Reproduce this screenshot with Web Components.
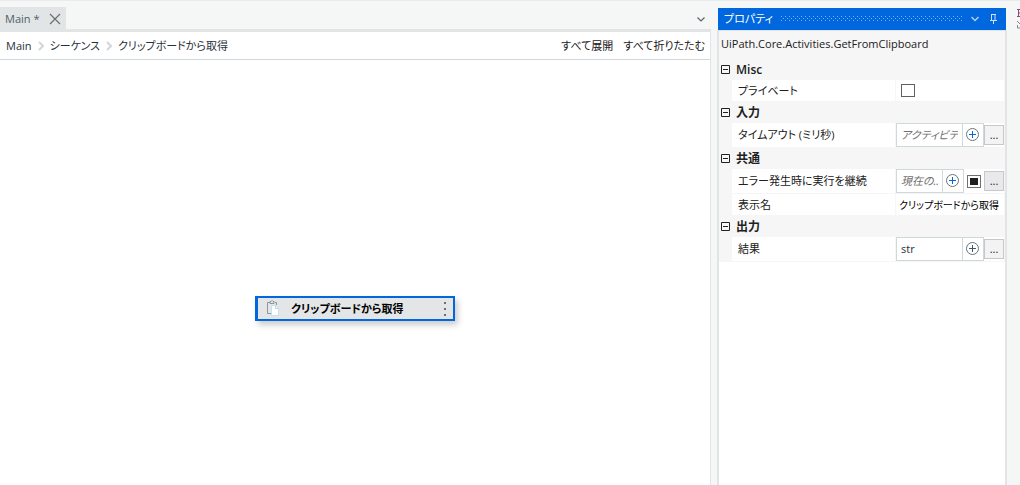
<!DOCTYPE html>
<html lang="ja">
<head>
<meta charset="UTF-8">
<title>Main</title>
<style>
    html, body {
        margin: 0;
        height: 100%;
    }

    body {
        --blue: #0067df;
        --chrome: #f4f7f6;
        --panel: #f6f6f6;
        --edge: #e2e5e5;
        --field: #cfd8dd;
        --ink: #202020;
        --navy: #273139;
        font-family: "Open Sans", "Noto Sans CJK JP", sans-serif;
        font-feature-settings: "palt";
        font-size: 11px;
        line-height: 16px;
        color: var(--ink);
        background: var(--chrome);
        overflow: hidden;
    }
</style>
</head>
<body>
<studio-app>
    <designer-pane slot="designer">
        <activity-card>クリップボードから取得</activity-card>
    </designer-pane>
    <properties-pane slot="properties" type="UiPath.Core.Activities.GetFromClipboard">
        <property-group label="Misc">
            <property-row label="プライベート" kind="check"></property-row>
        </property-group>
        <property-group label="入力">
            <property-row label="タイムアウト (ミリ秒)" kind="expression" hint="アクティビティ"></property-row>
        </property-group>
        <property-group label="共通">
            <property-row label="エラー発生時に実行を継続" kind="boolean" hint="現在の..."></property-row>
            <property-row label="表示名" kind="text" value="クリップボードから取得"></property-row>
        </property-group>
        <property-group label="出力">
            <property-row label="結果" kind="expression" value="str" plain></property-row>
        </property-group>
    </properties-pane>
</studio-app>

<script>
const RESET = `
    *, *::before, *::after { box-sizing: border-box; }
    button, input {
        font: inherit;
        font-feature-settings: inherit;
        color: inherit;
        margin: 0;
        padding: 0;
        border: 0;
        background: none;
        border-radius: 0;
        outline: none;
    }
    button { display: flex; align-items: center; justify-content: center; }
    svg { display: block; flex: none; }
`;

class StudioApp extends HTMLElement {
    constructor() {
        super();
        this.attachShadow({ mode: 'open' });
    }

    connectedCallback() {
        this.shadowRoot.innerHTML = `
            <style>
                ${RESET}
                :host {
                    box-sizing: border-box;
                    display: grid;
                    grid-template-columns: minmax(0, 1fr) 290px 13px;
                    height: 100vh;
                    border-top: 1px solid #e9ecec;
                }
                ::slotted(*) { min-width: 0; }
                ::slotted([slot="designer"]) { margin-right: 6px; }
                .dock {
                    padding: 7px 0 0 10px;
                    overflow: hidden;
                }
            </style>
            <slot name="designer"></slot>
            <slot name="properties"></slot>
            <div class="dock">
                <svg width="3" height="22" viewBox="0 0 3 22" fill="none">
                    <path d="M0 1.500h3M1.500 1v7M0 8.500h3M1 5h2" stroke="#8a4a80"/>
                    <path d="M0 13l3 3M.5 17v3H3" stroke="#85858a"/>
                </svg>
            </div>
        `;
    }
}

class DesignerPane extends HTMLElement {
    constructor() {
        super();
        this.attachShadow({ mode: 'open' });
    }

    connectedCallback() {
        const chevron = `
            <svg width="6" height="10" viewBox="0 0 6 10" fill="none" stroke="#cfd8dd" stroke-width="2">
                <path d="M1 1l4 4-4 4"/>
            </svg>`;

        this.shadowRoot.innerHTML = `
            <style>
                ${RESET}
                :host {
                    display: flex;
                    flex-direction: column;
                }
                .tabs {
                    display: flex;
                    align-items: flex-end;
                    justify-content: space-between;
                    height: 28px;
                }
                .tab {
                    display: flex;
                    align-items: center;
                    gap: 10px;
                    height: 22px;
                    padding: 2px 5px 0 5px;
                    background: var(--edge);
                    color: #526069;
                }
                .more { width: 20px; height: 20px; }
                .view {
                    flex: 1;
                    display: flex;
                    flex-direction: column;
                    border-top: 3px solid var(--edge);
                    border-right: 1px solid var(--edge);
                    background: #fff;
                }
                .bar {
                    display: flex;
                    align-items: center;
                    justify-content: space-between;
                    height: 28px;
                    padding: 0 5px 0 6px;
                    border-bottom: 1px solid var(--field);
                }
                nav, .actions {
                    display: flex;
                    align-items: center;
                    gap: 6px;
                }
                .actions { gap: 10px; }
                a {
                    color: var(--navy);
                    text-decoration: none;
                    white-space: nowrap;
                }
                .canvas {
                    flex: 1;
                    display: grid;
                    place-content: center;
                    padding-top: 72px;
                }
            </style>
            <div class="tabs">
                <div class="tab">
                    <span>Main *</span>
                    <button aria-label="閉じる">
                        <svg width="12" height="12" viewBox="0 0 12 12" fill="none" stroke="#6b6f72" stroke-width="1.200">
                            <path d="M1 1l10 10M11 1L1 11"/>
                        </svg>
                    </button>
                </div>
                <button class="more" aria-label="タブ一覧">
                    <svg width="8" height="5" viewBox="0 0 8 5" fill="none" stroke="#5a6469" stroke-width="1.200">
                        <path d="M.5 .5L4 4 7.500.5"/>
                    </svg>
                </button>
            </div>
            <div class="view">
                <div class="bar">
                    <nav>
                        <a href="#main">Main</a>${chevron}
                        <a href="#sequence">シーケンス</a>${chevron}
                        <a href="#activity">クリップボードから取得</a>
                    </nav>
                    <div class="actions">
                        <button>すべて展開</button>
                        <button>すべて折りたたむ</button>
                    </div>
                </div>
                <div class="canvas"><slot></slot></div>
            </div>
        `;
    }
}

class ActivityCard extends HTMLElement {
    constructor() {
        super();
        this.attachShadow({ mode: 'open' });
    }

    connectedCallback() {
        this.shadowRoot.innerHTML = `
            <style>
                ${RESET}
                :host {
                    box-sizing: border-box;
                    display: flex;
                    align-items: center;
                    width: 200px;
                    height: 25px;
                    padding: 0 6px 0 9px;
                    border: 2px solid var(--blue);
                    border-left-width: 3px;
                    background: #e3e5e7;
                    box-shadow: 3px 4px 6px rgba(0, 0, 0, 0.2);
                    color: #000;
                    font-weight: 600;
                }
                .title {
                    flex: 1;
                    margin-left: 12px;
                    white-space: nowrap;
                }
            </style>
            <svg width="12" height="17" viewBox="0 0 12 17" fill="none">
                <path d="M3 2.500H.5v11H4M8 2.500h1.500V5" stroke="#8a979e"/>
                <path d="M3 3.500v-2h1l1-1 1 1h1v2z" fill="#e3e5e7" stroke="#8a979e"/>
                <path d="M4.500 5.500h4l3 3v7h-7z" fill="#fff" stroke="#c5e3ee"/>
                <path d="M8.500 5.500v3h3" stroke="#b7dcea"/>
            </svg>
            <span class="title"><slot></slot></span>
            <button aria-label="オプション">
                <svg width="3" height="15" viewBox="0 0 3 15" fill="#6b6f72">
                    <path d="M0 1h2v2H0zM0 7h2v2H0zM0 13h2v2H0z"/>
                </svg>
            </button>
        `;
    }
}

class PropertiesPane extends HTMLElement {
    constructor() {
        super();
        this.attachShadow({ mode: 'open' });
    }

    connectedCallback() {
        this.shadowRoot.innerHTML = `
            <style>
                ${RESET}
                :host {
                    display: flex;
                    flex-direction: column;
                    padding-top: 7px;
                }
                header {
                    display: flex;
                    align-items: center;
                    height: 22px;
                    margin: 0 1px;
                    padding: 0 9px 0 6px;
                    background: var(--blue);
                    color: #fff;
                }
                h2 {
                    margin: 0;
                    font-size: 11px;
                    font-weight: 400;
                    white-space: nowrap;
                }
                .grip {
                    flex: 1;
                    width: 0;
                    height: 6px;
                    margin: 0 9px 0 8px;
                }
                header button + button { margin-left: 11px; }
                .body {
                    flex: 1;
                    border: 2px solid var(--edge);
                    border-width: 1px 2px 0;
                    background: #fff;
                }
                .type {
                    padding: 5px 2px 7px;
                    background: var(--panel);
                    color: var(--ink);
                }
            </style>
            <header>
                <h2>プロパティ</h2>
                <svg class="grip" aria-hidden="true">
                    <defs>
                        <pattern id="dots" width="4" height="4" patternUnits="userSpaceOnUse">
                            <path d="M0 0h1v1H0zM2 2h1v1H2z" fill="#7db3f0"/>
                        </pattern>
                    </defs>
                    <rect width="100%" height="100%" fill="url(#dots)"/>
                </svg>
                <button aria-label="メニュー">
                    <svg width="8" height="6" viewBox="0 0 8 6" fill="none" stroke="#b3d1f5" stroke-width="1.500">
                        <path d="M.5 1L4 4.500 7.500 1"/>
                    </svg>
                </button>
                <button aria-label="自動的に隠す">
                    <svg width="7" height="10" viewBox="0 0 7 10" fill="none" stroke="#cfe1f9">
                        <path d="M1 .5h5M1.500 0v6M5 0v6M0 6.500h7M3.500 7v3"/>
                    </svg>
                </button>
            </header>
            <div class="body">
                <div class="type">${this.getAttribute('type')}</div>
                <slot></slot>
            </div>
        `;
    }
}

class PropertyGroup extends HTMLElement {
    constructor() {
        super();
        this.attachShadow({ mode: 'open' });
    }

    connectedCallback() {
        this.shadowRoot.innerHTML = `
            <style>
                ${RESET}
                :host {
                    display: block;
                    background: var(--panel);
                }
                button {
                    justify-content: flex-start;
                    gap: 6px;
                    width: 100%;
                    height: 21px;
                    padding-left: 2px;
                    font-size: 12px;
                    font-weight: 600;
                }
                .rows { padding: 0 1px 0 13px; }
            </style>
            <button aria-expanded="true">
                <svg width="9" height="9" viewBox="0 0 9 9" fill="none" stroke="#202020">
                    <path d="M.5.5h8v8h-8zM2 4.500h5"/>
                </svg>
                ${this.getAttribute('label')}
            </button>
            <div class="rows"><slot></slot></div>
        `;
    }
}

class PropertyRow extends HTMLElement {
    constructor() {
        super();
        this.attachShadow({ mode: 'open' });
    }

    connectedCallback() {
        this.shadowRoot.innerHTML = `
            <style>
                ${RESET}
                :host {
                    display: grid;
                    grid-template-columns: minmax(0, 1fr) 108px;
                    column-gap: 1px;
                    border-bottom: 1px solid var(--panel);
                }
                label, .editor {
                    display: flex;
                    align-items: center;
                    min-height: 21px;
                    background: #fff;
                }
                label {
                    padding-left: 6px;
                    white-space: nowrap;
                }
                .field {
                    flex: 1;
                    display: flex;
                    min-width: 0;
                    height: 24px;
                    border: 1px solid var(--field);
                    background: #fff;
                }
                .field input {
                    flex: 1;
                    width: 0;
                    padding: 0 4px;
                    color: var(--navy);
                }
                input::placeholder {
                    color: #707070;
                    font-style: italic;
                    opacity: 1;
                }
                .add {
                    width: 21px;
                    border-left: 1px solid var(--field);
                }
                .browse {
                    width: 20px;
                    height: 20px;
                    border: 1px solid #c8c8cc;
                    background: #f3f3f3;
                }
                .boolean .browse { background: #e9e9ec; }
                input[type="checkbox"] {
                    appearance: none;
                    flex: none;
                    width: 14px;
                    height: 13px;
                    border: 1px solid #606060;
                    background: #fff;
                }
                .check input { margin-left: 5px; }
                .boolean input[type="checkbox"] {
                    margin: 0 3px;
                    padding: 2px;
                    border-color: #707070;
                    background: #202020;
                    background-clip: content-box;
                }
                .text input {
                    width: 100%;
                    padding-left: 3px;
                    color: #000;
                    font-size: 10px;
                }
            </style>
            <label for="value">${this.getAttribute('label')}</label>
            <div class="editor ${this.getAttribute('kind')}">${this.editor()}</div>
        `;
    }

    editor() {
        const kind = this.getAttribute('kind');
        const value = this.getAttribute('value') || '';

        if (kind === 'check') return '<input id="value" type="checkbox">';
        if (kind === 'text') return `<input id="value" value="${value}">`;

        const plus = this.hasAttribute('plain') ? '#40576a' : '#0067df';
        return `
            <div class="field">
                <input id="value" value="${value}" placeholder="${this.getAttribute('hint') || ''}">
                <button class="add" aria-label="追加">
                    <svg width="14" height="14" viewBox="0 0 14 14" fill="none">
                        <circle cx="6.500" cy="6.500" r="6" stroke="#68747c"/>
                        <path d="M3 6.500h7M6.500 3v7" stroke="${plus}"/>
                    </svg>
                </button>
            </div>
            ${kind === 'boolean' ? '<input type="checkbox" aria-label="継続">' : ''}
            <button class="browse">...</button>
        `;
    }
}

customElements.define('studio-app', StudioApp);
customElements.define('designer-pane', DesignerPane);
customElements.define('activity-card', ActivityCard);
customElements.define('properties-pane', PropertiesPane);
customElements.define('property-group', PropertyGroup);
customElements.define('property-row', PropertyRow);
</script>
</body>
</html>
